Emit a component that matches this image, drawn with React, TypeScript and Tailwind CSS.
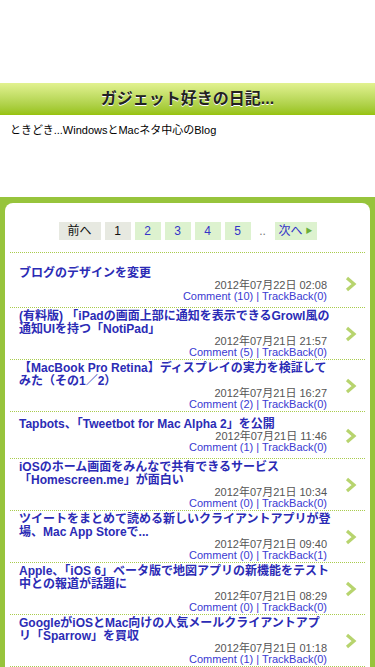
import React from "react";

type Post = {
  title: string;
  date: string;
  comments: number;
  trackbacks: number;
};

const posts: Post[] = [
  { title: "ブログのデザインを変更", date: "2012年07月22日 02:08", comments: 10, trackbacks: 0 },
  {
    title: "(有料版) 「iPadの画面上部に通知を表示できるGrowl風の通知UIを持つ「NotiPad」",
    date: "2012年07月21日 21:57",
    comments: 5,
    trackbacks: 0,
  },
  {
    title: "【MacBook Pro Retina】ディスプレイの実力を検証してみた（その1／2）",
    date: "2012年07月21日 16:27",
    comments: 2,
    trackbacks: 0,
  },
  { title: "Tapbots、「Tweetbot for Mac Alpha 2」を公開", date: "2012年07月21日 11:46", comments: 1, trackbacks: 0 },
  {
    title: "iOSのホーム画面をみんなで共有できるサービス「Homescreen.me」が面白い",
    date: "2012年07月21日 10:34",
    comments: 0,
    trackbacks: 0,
  },
  {
    title: "ツイートをまとめて読める新しいクライアントアプリが登場、Mac App Storeで...",
    date: "2012年07月21日 09:40",
    comments: 0,
    trackbacks: 1,
  },
  {
    title: "Apple、「iOS 6」ベータ版で地図アプリの新機能をテスト中との報道が話題に",
    date: "2012年07月21日 08:29",
    comments: 0,
    trackbacks: 0,
  },
  {
    title: "GoogleがiOSとMac向けの人気メールクライアントアプリ「Sparrow」を買収",
    date: "2012年07月21日 01:18",
    comments: 1,
    trackbacks: 0,
  },
];

const Chevron = () => (
  <svg width="12" height="16" viewBox="0 0 12 16" className="shrink-0">
    <polyline points="2,2 9,8 2,14" fill="none" stroke="#b7d46e" strokeWidth="3.2" />
  </svg>
);

const PostRow = ({ post, first }: { post: Post; first: boolean }) => (
  <li
    className={`flex items-center border-b border-dotted border-[#a9cc4c] pl-[9px] pr-[8px] ${
      first ? "min-h-[55px] pt-[9px]" : "min-h-[47px] pt-[2px]"
    } pb-[1px]`}
  >
    <div className="flex flex-1 flex-col">
      <a className="pr-[14px] text-[12px] font-bold leading-[13px] text-[#2b2bb5]">{post.title}</a>
      <div className="pr-[18px] text-right text-[11px] leading-[11px]">
        <div className="text-[#555]">{post.date}</div>
        <div className="text-[#3a3ad2]">
          Comment ({post.comments}) | TrackBack({post.trackbacks})
        </div>
      </div>
    </div>
    <Chevron />
  </li>
);

const Pager = () => (
  <div className="flex items-center justify-center gap-[4px] text-[12px] leading-[18px]">
    <span className="w-[42px] bg-[#e7e9e1] text-center text-[#111]">前へ</span>
    <span className="w-[26px] bg-[#e7e9e1] text-center text-[#111]">1</span>
    {[2, 3, 4, 5].map((n) => (
      <a key={n} className="w-[26px] bg-[#ddf2cf] text-center text-[#3434c8]">
        {n}
      </a>
    ))}
    <span className="w-[16px] text-center text-[#777]">..</span>
    <a className="flex w-[42px] items-center justify-center gap-[3px] bg-[#ddf2cf] text-[#3434c8]">
      次へ
      <span className="text-[7px] text-[#6cae3a]">▶</span>
    </a>
  </div>
);

export default function App() {
  return (
    <div className="min-h-[667px] bg-white font-['Liberation_Sans','Noto_Sans_CJK_JP',sans-serif]">
      <div className="h-[83px]" />

      <header className="flex h-[32px] items-center justify-center bg-gradient-to-b from-[#e2f290] to-[#97c208]">
        <h1 className="text-[16px] font-bold text-[#222] [text-shadow:0_1px_0_#fff]">
          ガジェット好きの日記...
        </h1>
      </header>

      <p className="h-[82px] px-[10px] pt-[8px] text-[11px] leading-[14px] text-black">
        ときどき...WindowsとMacネタ中心のBlog
      </p>

      <main className="bg-[#97c43c] px-[5px] pt-[6px]">
        <div className="rounded-t-[8px] bg-white px-[5px] pt-[19px] pb-[10px]">
          <Pager />
          <ul className="mt-[12px] border-t border-dotted border-[#a9cc4c]">
            {posts.map((p, i) => (
              <PostRow key={i} post={p} first={i === 0} />
            ))}
          </ul>
        </div>
      </main>
    </div>
  );
}
